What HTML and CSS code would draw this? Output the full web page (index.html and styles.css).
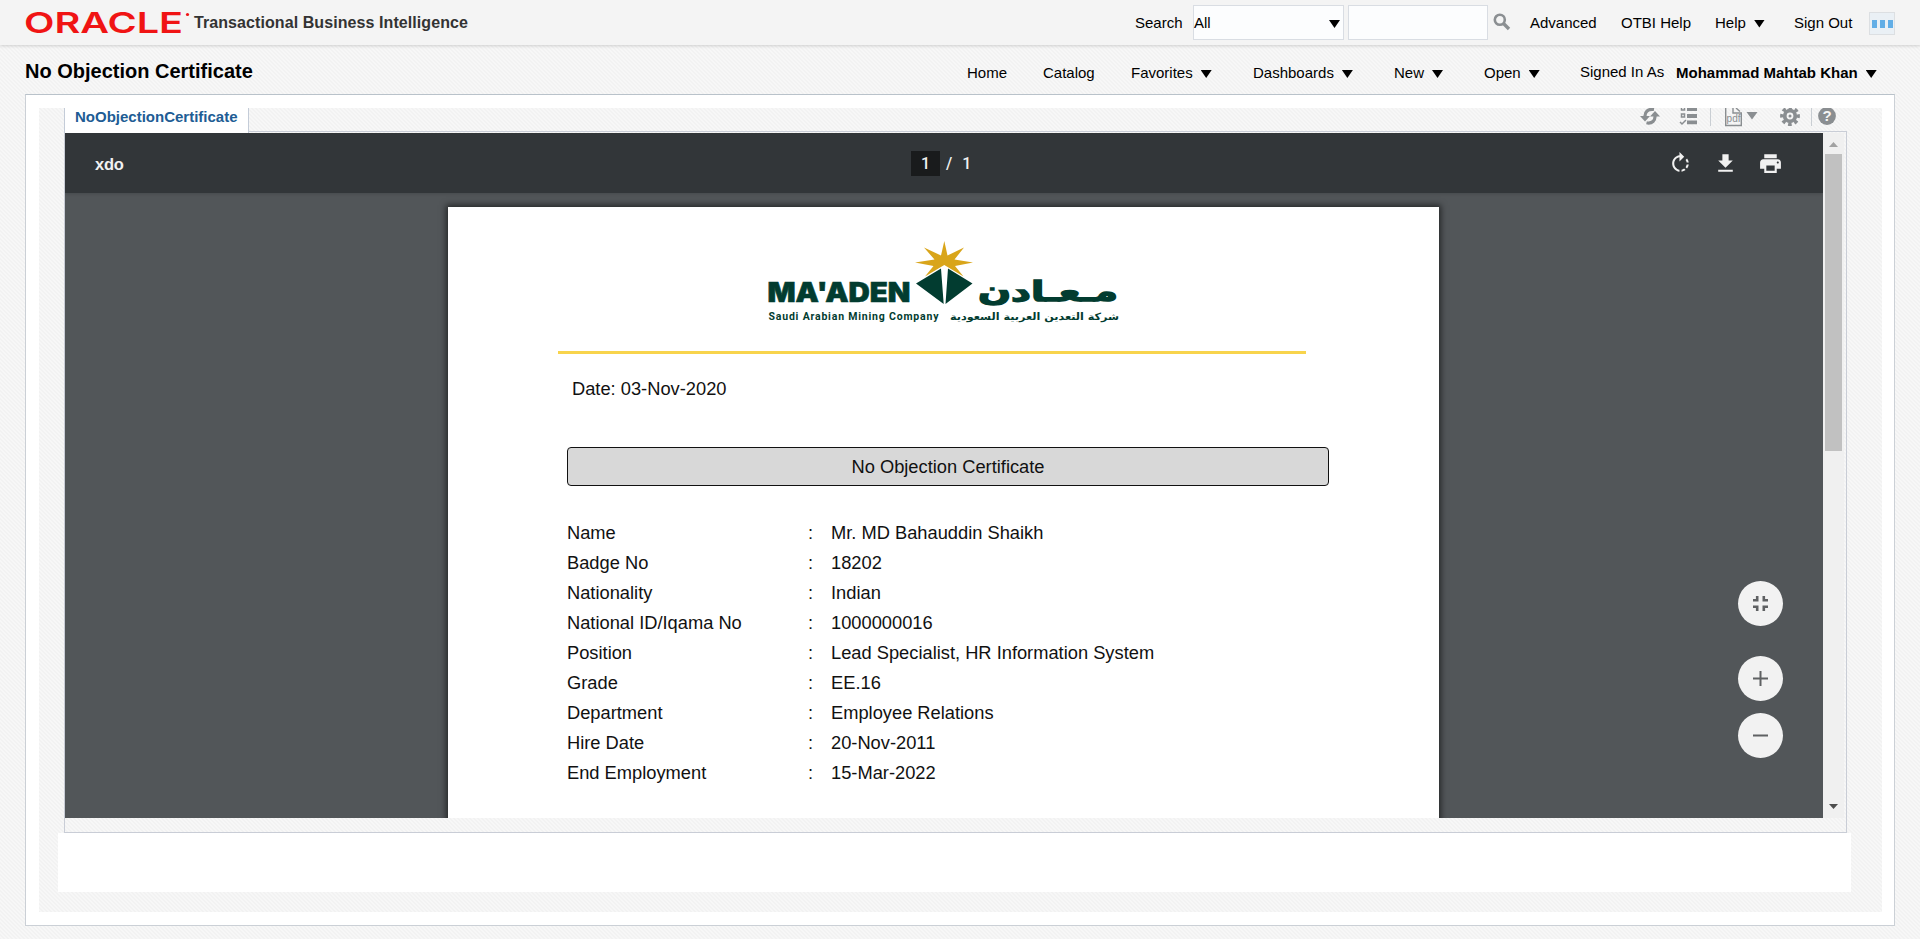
FILE: index.html
```html
<!DOCTYPE html>
<html lang="en">
<head>
<meta charset="utf-8">
<title>No Objection Certificate</title>
<link rel="stylesheet" href="styles.css">
</head>
<body>
<header class="topbar">
  <svg class="oracle" width="169" height="45" viewBox="0 0 169 45">
    <text x="-1" y="32.5" textLength="159" lengthAdjust="spacingAndGlyphs">ORACLE</text>
    <circle cx="162.500" cy="14.5" r="1.600"/>
  </svg>
  <span class="product">Transactional Business Intelligence</span>
  <div class="tools">
    <span>Search</span>
    <div class="select"><span>All</span><i class="arrow"></i></div>
    <div class="input"></div>
    <svg class="mag" width="18" height="18" viewBox="0 0 18 18"><circle cx="6.8" cy="6.8" r="5" fill="none" stroke="#8b8f92" stroke-width="2.6"/><path d="M10.5 10.5L16 16" stroke="#8b8f92" stroke-width="3.4"/></svg>
    <a>Advanced</a><a>OTBI Help</a><a>Help<i class="arrow"></i></a><a>Sign Out</a>
    <div class="apps"><b></b><b></b><b></b></div>
  </div>
</header>
<div class="titlebar">
  <h1>No Objection Certificate</h1>
  <nav class="menu">
    <a>Home</a><a>Catalog</a><a>Favorites<i class="arrow"></i></a><a>Dashboards<i class="arrow"></i></a><a>New<i class="arrow"></i></a><a>Open<i class="arrow"></i></a><span class="signed">Signed In As</span><a class="user">Mohammad Mahtab Khan<i class="arrow"></i></a>
  </nav>
</div>
<main class="panel">
  <div class="inner texture">
    <div class="tabs">
      <div class="tab">NoObjectionCertificate</div>
      <div class="actions">
        <svg width="20" height="25" viewBox="0 0 20 25"><path d="M5 9C4.500 4 8 .5 14 1.500M15 7.500C15.500 12.500 12 16 6.500 14.800" fill="none" stroke="#8a8e91" stroke-width="3.200"/><path d="M0 8H10L5 13.500zM10 8.500H20L15 3z" fill="#8a8e91"/></svg>
        <svg width="19" height="25" viewBox="0 0 19 25" fill="#8a8e91"><path d="M8 0h10v3H8zM8 6h10v4H8zM8 12.500h10v3.800H8z"/><path d="M2.500-1h3v3h-3zM2.500 6h3v3h-3zM1 14l2 2 4-4" fill="none" stroke="#8a8e91" stroke-width="1.500"/></svg>
        <i class="sep"></i>
        <svg width="34" height="25" viewBox="0 0 34 25"><path d="M1.700-1V17.500H17.300V5H9V-1M12 0l4 3.500" fill="none" stroke="#8a8e91" stroke-width="1.400"/><text class="pdf" x="2.600" y="13.500">pdf</text><path d="M22.500 4H33.500L28 11.500z" fill="#8a8e91"/></svg>
        <svg width="20" height="25" viewBox="0 0 20 25"><g fill="none" stroke="#8a8e91"><circle cx="10" cy="8" r="8.200" stroke-width="3.400" stroke-dasharray="3.500 2.940" transform="rotate(-12 10 8)"/><circle cx="10" cy="8" r="5.300" stroke-width="3.800"/></g><circle cx="10" cy="8" r="1.500" fill="#8a8e91"/></svg>
        <i class="sep"></i>
        <svg width="18" height="25" viewBox="0 0 18 25"><circle cx="9" cy="8" r="8.900" fill="#8a8e91"/><text class="q" x="9" y="13.200" text-anchor="middle">?</text></svg>
      </div>
    </div>
    <div class="frame">
      <section class="viewer">
        <div class="pdfbar">
          <span class="file">xdo</span>
          <div class="pages"><span class="current">1</span><span>/</span><span>1</span></div>
          <div class="icons">
            <svg viewBox="0 0 24 24"><path d="M15.550 5.550L11 1v3.070C7.060 4.560 4 7.920 4 12s3.050 7.440 7 7.930v-2.020c-2.840-.48-5-2.940-5-5.910s2.160-5.430 5-5.910V10l4.550-4.450zM19.930 11c-.17-1.390-.72-2.730-1.620-3.890l-1.420 1.420c.54.75.88 1.600 1.020 2.470h2.020zM13 17.900v2.020c1.390-.17 2.740-.71 3.900-1.610l-1.440-1.440c-.75.54-1.590.89-2.460 1.030zm3.890-2.420l1.420 1.410c.9-1.160 1.450-2.500 1.620-3.890h-2.020c-.14.87-.48 1.720-1.020 2.480z"/></svg>
            <svg viewBox="0 0 24 24"><path d="M19 9h-4V3H9v6H5l7 7 7-7zM5 18v2h14v-2H5z"/></svg>
            <svg viewBox="0 0 24 24"><path d="M19 8H5c-1.660 0-3 1.340-3 3v6h4v4h12v-4h4v-6c0-1.660-1.340-3-3-3zm-3 11H8v-5h8v5zm3-7c-.55 0-1-.45-1-1s.45-1 1-1 1 .45 1 1-.45 1-1 1zm-1-9H6v4h12V3z"/></svg>
          </div>
        </div>
        <div class="canvas">
          <article class="page">
            <svg class="logo" width="356" height="86" viewBox="0 0 356 86">
              <path fill="#d9a51a" d="M178.300 0L181.500 14.500 198 6.500 188.500 18.500 207 21.500 189 25 197.500 35.500 178.300 24 159 35.500 167.500 25 149 21.500 168.500 18.500 158 6.500 175 14.500z"/>
              <path fill="#023c30" d="M175 27.500L150 42.500 177.700 63zM182 27.500L206.500 42.500 179.500 63z"/>
              <g fill="#023c30">
                <text class="brand" x="1.500" y="61" textLength="143" lengthAdjust="spacingAndGlyphs">MA'ADEN</text>
                <text class="brand-ar" direction="rtl" x="352" y="60" textLength="140" lengthAdjust="spacingAndGlyphs">مـعـادن</text>
                <text class="sub" x="2.500" y="79" textLength="170" lengthAdjust="spacing">Saudi Arabian Mining Company</text>
                <text class="sub-ar" direction="rtl" x="353" y="79" textLength="169" lengthAdjust="spacingAndGlyphs">شركة التعدين العربية السعودية</text>
              </g>
            </svg>
            <div class="rule"></div>
            <p class="date">Date: 03-Nov-2020</p>
            <h2>No Objection Certificate</h2>
            <dl>
              <dt>Name</dt><dd class="c">:</dd><dd>Mr. MD Bahauddin Shaikh</dd>
              <dt>Badge No</dt><dd class="c">:</dd><dd>18202</dd>
              <dt>Nationality</dt><dd class="c">:</dd><dd>Indian</dd>
              <dt>National ID/Iqama No</dt><dd class="c">:</dd><dd>1000000016</dd>
              <dt>Position</dt><dd class="c">:</dd><dd>Lead Specialist, HR Information System</dd>
              <dt>Grade</dt><dd class="c">:</dd><dd>EE.16</dd>
              <dt>Department</dt><dd class="c">:</dd><dd>Employee Relations</dd>
              <dt>Hire Date</dt><dd class="c">:</dd><dd>20-Nov-2011</dd>
              <dt>End Employment</dt><dd class="c">:</dd><dd>15-Mar-2022</dd>
            </dl>
          </article>
        </div>
        <div class="zoom">
          <div class="fab fit"><svg width="15" height="15" viewBox="0 0 15 15"><path d="M0 4.200H4.200V0M10.800 0V4.200H15M0 10.800H4.200V15M10.800 15V10.800H15"/></svg></div>
          <div class="fab"><svg width="15" height="15" viewBox="0 0 15 15"><path d="M0 7.500H15M7.500 0V15"/></svg></div>
          <div class="fab"><svg width="15" height="15" viewBox="0 0 15 15"><path d="M0 7.500H15"/></svg></div>
        </div>
      </section>
      <div class="scroll"><i class="up"></i><i class="thumb"></i><i class="down"></i></div>
    </div>
    <div class="blank"></div>
  </div>
</main>
</body>
</html>
```
FILE: styles.css
```css
* { box-sizing: border-box; }
body { margin: 0; width: 1920px; height: 939px; overflow: hidden; font: 15px/20px "Liberation Sans", Arial, sans-serif; color: #000; }
body, .texture { background: repeating-linear-gradient(45deg, #f2f2f2 0, #f2f2f2 1.4px, #f7f7f7 1.4px, #f7f7f7 2.828px); }
html { height: 943px; background: #fff; }
h1, h2, p, dl, dd { margin: 0; }
.topbar { position: relative; height: 45px; padding-left: 25px; display: flex; align-items: center; background: #f4f4f4; box-shadow: 0 1px 3px rgba(0,0,0,.16); }
.oracle { fill: #f01414; }
.oracle text { font: 600 29px Inter, sans-serif; }
.product { width: 300px; font-size: 16px; letter-spacing: .08px; font-weight: bold; color: #333; padding-top: 1px; white-space: nowrap; }
.tools { margin-left: 641px; display: grid; grid-template-columns: 58px 155px 145px 37px 91px 94px 79px 75px 26px; align-items: center; }
.tools > span, .tools > a { white-space: nowrap; }
.select, .input { height: 35px; background: #fcfdfe; border: 1px solid #d9dde3; }
.select { width: 151px; display: flex; align-items: center; justify-content: space-between; padding: 0 3px 0 0; }
.input { width: 140px; }
.arrow { display: inline-block; width: 11px; height: 8px; background: #000; clip-path: polygon(0 0, 100% 0, 50% 100%); margin-left: 8px; }
.select .arrow { margin-top: 3px; }
.mag { margin: -1px 0 0 0; }
.apps { width: 26px; height: 23px; display: flex; justify-content: center; align-items: center; gap: 3px; margin-top: 2px; background: #eaf0f5; border: 1px solid #dcdfe2; }
.apps b { width: 5px; height: 8px; background: #62aee6; }
.titlebar { height: 49px; padding-left: 25px; display: flex; align-items: flex-start; }
h1 { width: 942px; padding-top: 14px; font-size: 20px; line-height: 24px; }
.menu { padding-top: 18px; display: grid; grid-template-columns: 76px 88px 122px 141px 90px 96px 96px 210px; white-space: nowrap; }
.signed { margin-top: -1px; }
.user { font-weight: bold; }
.panel { margin-left: 25px; width: 1870px; height: 832px; padding: 13px 12px 13px 13px; background: #fff; border: 1px solid #cbd0d6; border-top-color: #b9c2ca; }
.inner { height: 804px; padding: 0 31px 0 25px; overflow: hidden; }
.tabs { height: 23px; display: flex; justify-content: space-between; }
.tab { position: relative; z-index: 1; width: 185px; height: 25px; padding-left: 10px; line-height: 17px; font-weight: bold; color: #205c94; background: #fff; border: solid #c4ccd8; border-width: 0 1px; white-space: nowrap; }
.actions { display: grid; grid-template-columns: 39px 31px 14px 56px 31px 7px 18px; margin-right: 15px; }
.sep { width: 1px; height: 18px; background: #c9ced3; }
.pdf { font: 10px "Liberation Sans", sans-serif; fill: #8a8e91; }
.q { font: bold 15px "Liberation Sans", sans-serif; fill: #f4f4f4; }
.frame { width: 1783px; height: 702px; border: 1px solid #c9cdd6; padding-top: 1px; display: flex; align-items: flex-start; }
.viewer { position: relative; width: 1758px; height: 685px; overflow: hidden; background: #525659; }
.pdfbar { position: relative; z-index: 1; height: 60px; padding: 0 40px 0 30px; display: grid; grid-template-columns: 816px 1fr auto; align-items: center; background: #323639; color: #f1f1f1; box-shadow: 0 1px 3px rgba(0,0,0,.15); }
.file { font: bold 16.5px "Liberation Sans", sans-serif; letter-spacing: -.2px; padding-top: 2px; }
.pages { display: flex; align-items: center; gap: 10px; font: 500 16px Roboto, sans-serif; }
.pages .current { width: 29px; height: 25px; line-height: 25px; text-align: center; background: #191b1c; margin-right: -4px; }
.icons { display: flex; gap: 20px; }
.icons svg { width: 25px; height: 25px; fill: #f1f1f1; }
.canvas { padding: 14px 0 0 383px; }
.page { width: 991px; height: 1200px; padding-top: 34px; background: #fff; box-shadow: 0 0 6px 2px rgba(0,0,0,.55); font-size: 18.3px; line-height: 30px; color: #111; }
.logo { display: block; margin-left: 318px; }
.brand { font: 900 26.5px Inter, sans-serif; stroke: #023c30; stroke-width: .6px; }
.brand-ar { font: bold 27px "DejaVu Sans", sans-serif; stroke: #023c30; stroke-width: 1.4px; }
.sub { font: bold 10.5px Roboto, sans-serif; }
.sub-ar { font: bold 10px "DejaVu Sans", sans-serif; }
.rule { width: 748px; height: 3px; margin: 24px 0 0 110px; background: #f8d44c; }
.date { margin: 20px 0 0 124px; }
h2 { width: 762px; height: 39px; margin: 43px 0 0 119px; border: 1px solid #111; border-radius: 4px; background: #d8d8d8; font-size: 18.3px; font-weight: normal; line-height: 38px; text-align: center; }
dl { margin: 32px 0 0 119px; display: grid; grid-template-columns: 241px 23px 1fr; grid-auto-rows: 30px; }
.zoom { position: absolute; right: 40px; top: 448px; }
.fab { width: 45px; height: 45px; margin-bottom: 12px; display: flex; align-items: center; justify-content: center; border-radius: 50%; background: #f2f2f2; }
.fab.fit { margin-bottom: 30px; }
.fab svg { fill: none; stroke: #5f6163; stroke-width: 2; }
.fab.fit svg { stroke-width: 2.6; }
.scroll { width: 21px; height: 685px; padding-left: 2px; background: #f0f0f0; display: flex; flex-direction: column; align-items: flex-start; }
.up { width: 9px; height: 5px; margin: 9px 0 7px 4px; background: #a2a2a2; clip-path: polygon(50% 0, 100% 100%, 0 100%); }
.thumb { width: 17px; height: 297px; background: #c1c1c1; }
.down { width: 9px; height: 5px; margin: auto 0 9px 4px; background: #4d4d4d; clip-path: polygon(0 0, 100% 0, 50% 100%); }
.blank { width: 1793px; height: 59px; margin-left: -6px; background: #fff; }
```
